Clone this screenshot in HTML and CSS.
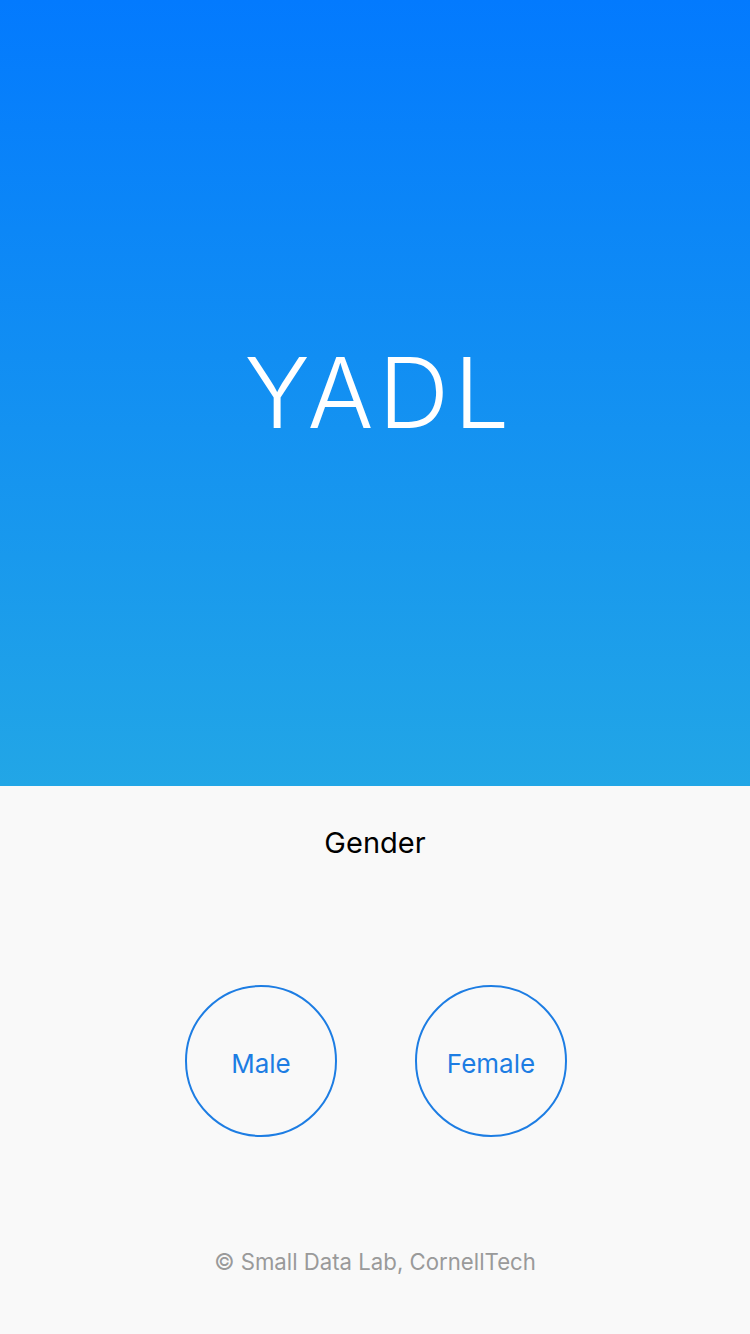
FILE: index.html
```html
<!DOCTYPE html>
<html>
<head>
<meta charset="utf-8">
<link rel="stylesheet" href="styles.css">
</head>
<body>
<div class="app">
  <header class="hero">
    <h1 class="logo">YADL</h1>
  </header>
  <main class="panel">
    <div class="question">Gender</div>
    <div class="choices">
      <button class="choice">Male</button>
      <button class="choice">Female</button>
    </div>
    <footer class="credit">© Small Data Lab, CornellTech</footer>
  </main>
</div>
</body>
</html>
```
FILE: styles.css
```css
html, body {
  margin: 0;
  padding: 0;
}
body {
  width: 750px;
  height: 1334px;
  overflow: hidden;
  background: #f9f9f9;
  font-family: "Inter", "Roboto", "Liberation Sans", sans-serif;
}
.app {
  display: flex;
  flex-direction: column;
  height: 1334px;
}
.hero {
  height: 786px;
  background: linear-gradient(to bottom, #037afe 0%, #22a6e6 100%);
  display: flex;
  align-items: center;
  justify-content: center;
}
.logo {
  margin: 0;
  color: #ffffff;
  font-weight: 300;
  font-size: 98px;
  letter-spacing: 5px;
  padding-left: 9px;
  line-height: 1;
}
.panel {
  flex: 1;
  display: flex;
  flex-direction: column;
  align-items: center;
}
.question {
  margin-top: 39px;
  font-size: 29px;
  line-height: 36px;
  color: #000;
  font-weight: 400;
}
.choices {
  margin-top: 124px;
  display: flex;
  gap: 78px;
  padding-left: 2px;
}
.choice {
  box-sizing: border-box;
  width: 152px;
  height: 152px;
  border-radius: 50%;
  border: 2px solid #1d7de3;
  background: transparent;
  color: #1d7de3;
  font-family: inherit;
  font-size: 26px;
  padding: 0;
  padding-top: 4px;
}
.credit {
  margin-top: auto;
  margin-bottom: 58px;
  font-size: 22.2px;
  color: #9a9a9a;
  line-height: 28px;
}
```
